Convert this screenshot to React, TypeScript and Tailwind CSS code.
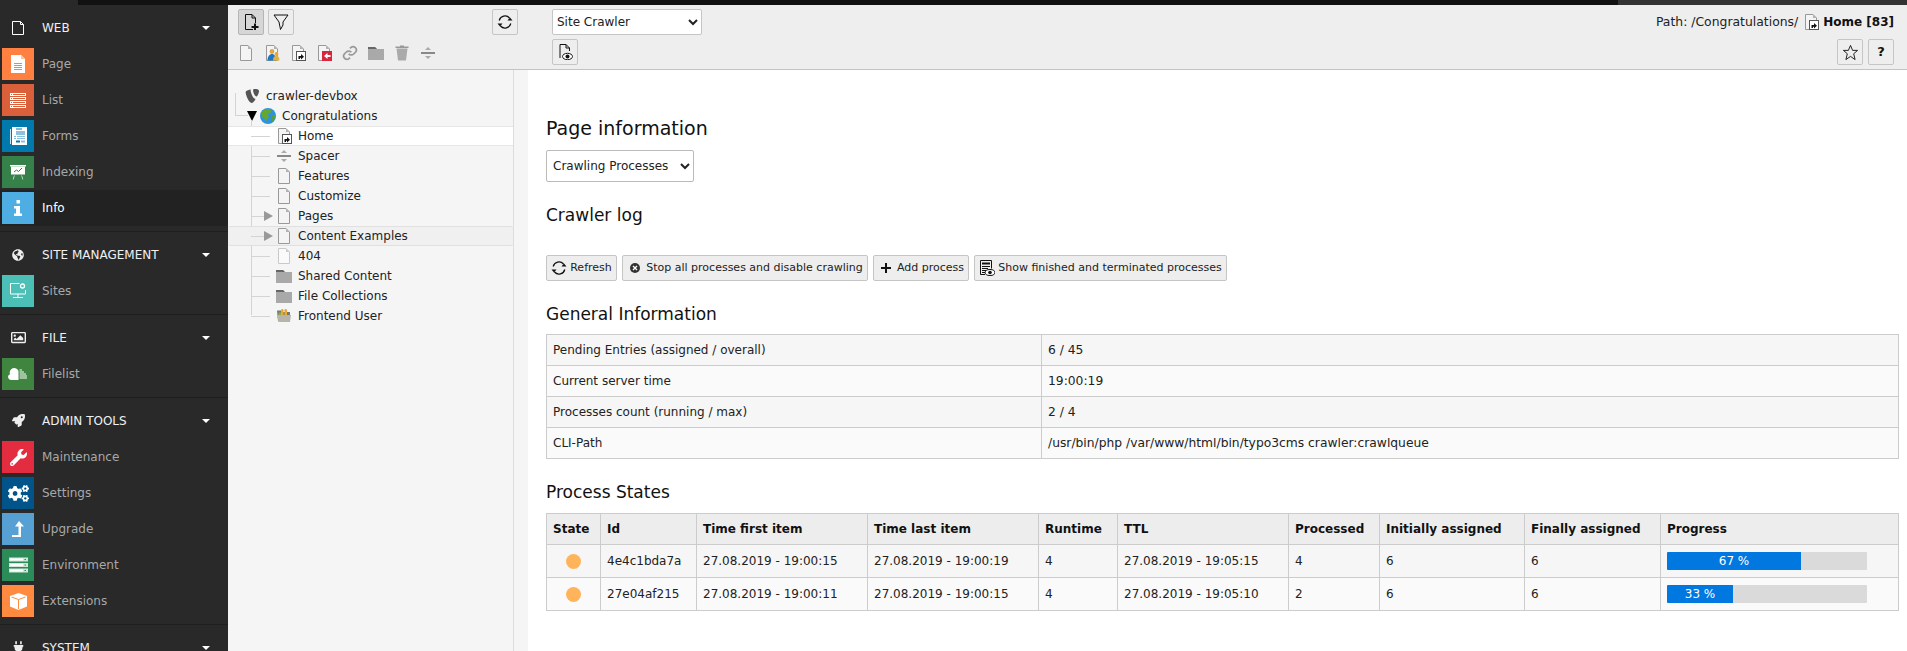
import type { ReactNode } from 'react'
import { FaCogs, FaGlobeAmericas, FaPlug, FaRegImage, FaRocket, FaWrench } from 'react-icons/fa'

const Svg = ({ size = 16, children }: { size?: number; children: ReactNode }) => (
  <svg width={size} height={size} viewBox="0 0 16 16" className="shrink-0">
    {children}
  </svg>
)

// generic page icon, the overlay goes in the lower right corner
const PageIcon = ({ overlay, light }: { overlay?: 'shortcut' | 'shortcutRed' | 'users'; light?: boolean }) => (
  <Svg>
    <path d="M2.500.5h7.500l3.500 3.500v11.500h-11z" fill={light ? '#fafafa' : '#f4f4f4'} stroke={light ? '#c9c9c9' : '#999'} />
    <path d="M10 .5v3.500h3.500z" fill={light ? '#ccc' : '#b2b2b2'} />
    {overlay === 'shortcut' && (
      <>
        <rect x="6.500" y="6.500" width="9" height="9" fill="#fff" stroke="#555" />
        <path d="M8.500 14v-3h2.500V9l3 2.800-3 2.700v-1.800H10V14z" fill="#111" />
      </>
    )}
    {overlay === 'shortcutRed' && (
      <>
        <rect x="6" y="6" width="10" height="10" fill="#d7263d" />
        <path d="M14.500 10h-3V8l-3.500 3 3.500 3v-2h3z" fill="#fff" />
      </>
    )}
    {overlay === 'users' && (
      <>
        <circle cx="8" cy="6.500" r="2.400" fill="#e8a33d" />
        <path d="M3.500 15.500c0-4 2-6.500 4.500-6.500s4 2.500 4 6.500z" fill="#1d76c4" />
        <circle cx="12.500" cy="9" r="1.900" fill="#e8a33d" />
        <path d="M9 15.500c0-3 1.400-4.800 3.300-4.800s3.200 1.800 3.200 4.800z" fill="#e2b13c" />
      </>
    )}
  </Svg>
)

const FolderIcon = () => (
  <Svg>
    <path d="M0 2h7l2 2h7v11H0z" fill="#a9a9a9" />
    <path d="M0 2h7l2 2H0z" fill="#666" />
  </Svg>
)

const FrontendUserIcon = () => (
  <Svg>
    <path d="M1 2.500h4l1.500 1.500h7.500v9H2z" fill="#777" />
    <rect x="5" y="1" width="2.500" height="7" rx="1.200" fill="#e6a93a" />
    <rect x="8.500" y="1" width="2.500" height="7" rx="1.200" fill="#e6a93a" />
    <path d="M2.500 14L1 7h14l-1 7z" fill="#b5b5ab" />
    <path d="M2.500 4.500h2.500v2.500H2.500z" fill="#8fae3c" />
  </Svg>
)

const SpacerIcon = () => (
  <Svg>
    <path d="M1 7h14v2H1z" fill="#888" />
    <path d="M8 2l3 3H5zM8 14l-3-3h6z" fill="#aaa" />
  </Svg>
)

const GlobeIcon = () => (
  <Svg>
    <circle cx="8" cy="8" r="8" fill="#2f93dc" />
    <path d="M4 1.500l5.500-.5 2 2-1.500 2.500-2.500.5 1.500 2.500-2 2.500-1 3-1.500-3.500-2.500-2-.5-3.500z" fill="#64a82f" />
    <path d="M11 8l4-.5-.5 3.500-2.500 2.500z" fill="#5a9f35" />
  </Svg>
)

const Typo3Logo = () => (
  <Svg>
    <path
      d="M11.600 10.700c-.2.100-.4.100-.6.100-1.800 0-4.400-6.200-4.400-8.200 0-.7.200-1 .4-1.200C4.900 1.600 2.700 2.300 2 3.200c-.2.200-.3.600-.3 1.100C1.700 7.500 5.100 15 7.600 15c1.200 0 3.100-2 4-4.300zM10.400 1c2.300 0 4.600.4 4.600 1.700 0 2.600-1.700 5.800-2.500 5.800-1.500 0-3.400-4.100-3.400-6.100 0-1 .4-1.400 1.300-1.400z"
      fill="#555"
    />
  </Svg>
)

const EyeBadge = () => (
  <>
    <ellipse cx="10.500" cy="12.500" rx="5" ry="3.200" fill="#fff" stroke="#111" />
    <circle cx="10.500" cy="12.500" r="2" fill="#111" />
  </>
)

const RefreshIcon = () => (
  <Svg>
    <path d="M2.200 6.500A6 6 0 0 1 12.500 4" fill="none" stroke="#111" strokeWidth="1.300" />
    <path d="M13.800 9.500A6 6 0 0 1 3.500 12" fill="none" stroke="#111" strokeWidth="1.300" />
    <path d="M10.500 6.500h5l-2.500-3zM5.500 9.500h-5l2.500 3z" fill="#111" />
  </Svg>
)

/* module icons, white on coloured square */
const moduleGlyphs: Record<string, ReactNode> = {
  Page: (
    <svg width="14" height="18" viewBox="0 0 14 18">
      <path d="M0 0h10l4 4v14H0z" fill="#fff" />
      <path d="M10 0l4 4h-4z" fill="#ffc49e" />
      <path d="M3 8h8v1H3zM3 10h8v1H3zM3 12h8v1H3zM3 14h8v1H3z" fill="#ff8040" />
    </svg>
  ),
  List: (
    <svg width="16" height="15" viewBox="0 0 16 15">
      <path d="M0 0h16v3H0zM0 4h16v3H0zM0 8h16v3H0zM0 12h16v3H0z" fill="#fff" />
      <path d="M1 1h1v1H1zM1 5h1v1H1zM1 9h1v1H1zM1 13h1v1H1zM3 1h12v1H3zM3 5h12v1H3zM3 9h12v1H3zM3 13h12v1H3z" fill="#d9603a" />
    </svg>
  ),
  Forms: (
    <svg width="17" height="18" viewBox="0 0 17 18">
      <path d="M0 2h1v15H0z" fill="#cfe6f1" />
      <path d="M2 0h15v18H2z" fill="#fff" />
      <path d="M6 4h9v4H6z" fill="#8cc0dc" />
      <path d="M6 1.500h6v1H6zM6 13.500h4v2H6z" fill="#0079ad" />
      <path d="M11 13.500h4v2h-4zM7 9h8v1H7zM7 11h8v1H7z" fill="#8cc0dc" />
      <path d="M4.500 9h1v1h-1zM4.500 11h1v1h-1z" fill="#0079ad" />
    </svg>
  ),
  Indexing: (
    <svg width="16" height="15" viewBox="0 0 16 15">
      <path d="M0 0h16v1.500H0z" fill="#fff" />
      <path d="M1 1.500h14v8H1z" fill="#fff" />
      <path d="M4 7l2.500-2 2 1.500L12 3" fill="none" stroke="#36804a" strokeWidth="1" />
      <path d="M4 10.500l-1.300 4h.8l1.300-4zM12 10.500l1.300 4h-.8l-1.300-4z" fill="#fff" opacity=".8" />
    </svg>
  ),
  Info: (
    <svg width="8" height="16" viewBox="0 0 8 16">
      <path d="M2.500 0h3.500v3.500H2.500zM0 6h6v7.500h2V16H0v-2.500h2V8.500H0z" fill="#fff" />
    </svg>
  ),
  Sites: (
    <svg width="16" height="16" viewBox="0 0 16 16">
      <path d="M9.500.5H.5v10.500h15V7" fill="none" stroke="#fff" strokeWidth="1" />
      <path d="M7.500 11h1v3h-1zM3 14h10v1H3z" fill="#fff" />
      <circle cx="12.500" cy="3" r="2" fill="none" stroke="#fff" strokeWidth="1.300" />
    </svg>
  ),
  Filelist: (
    <svg width="20" height="12" viewBox="0 0 20 12">
      <path d="M3 12a3 3 0 0 1-1-5.800A4.500 4.500 0 0 1 10.500 3v9z" fill="#fff" />
      <path d="M11.500 1.500H14v1h-2.500zM11.500 3.500h4.500v1h-4.500zM11.500 5.500H18v1h-6.500zM11.500 7.500H19v1h-7.500zM11.500 9.500H19v1h-7.500z" fill="#fff" />
    </svg>
  ),
  Maintenance: <FaWrench size={17} color="#fff" className="-scale-y-100 -rotate-90" />,
  Settings: <FaCogs size={21} color="#fff" />,
  Upgrade: (
    <svg width="12" height="16" viewBox="0 0 12 16">
      <path d="M7 0l5 5.500H9V16H0v-2h6.500V5.500H3z" fill="#fff" />
    </svg>
  ),
  Environment: (
    <svg width="19" height="16" viewBox="0 0 19 16">
      <path d="M0 .5h19v4H0zM0 6h19v4H0zM0 11.500h19v4H0z" fill="#cfe5d8" />
      <path d="M1 1.500h13v2H1zM1 7h13v2H1zM1 12.500h13v2H1z" fill="#fff" />
      <path d="M15.500 2H17v1h-1.500zM15.500 7.500H17v1h-1.500zM15.500 13H17v1h-1.500z" fill="#2b8c59" />
    </svg>
  ),
  Extensions: (
    <svg width="17" height="17" viewBox="0 0 17 17">
      <path d="M8.500 0L17 3v10.500L8.500 17 0 13.500V3z" fill="#fff" />
      <path d="M1.500 4l7 2.500 7-2.500M8.500 6.500V16" fill="none" stroke="#ff8a40" strokeWidth="1" />
    </svg>
  ),
}

const nav = [
  {
    title: 'WEB',
    icon: (
      <svg width="12" height="14" viewBox="0 0 12 14">
        <path d="M.5.500h8l3 3v10H.5zM8.500.500v3h3" fill="none" stroke="#fff" />
      </svg>
    ),
    items: [
      { name: 'Page', color: 'bg-[#ff8040]' },
      { name: 'List', color: 'bg-[#d9603a]' },
      { name: 'Forms', color: 'bg-[#0079ad]' },
      { name: 'Indexing', color: 'bg-[#36804a]' },
      { name: 'Info', color: 'bg-[#4eaee3]', active: true },
    ],
  },
  {
    title: 'SITE MANAGEMENT',
    icon: <FaGlobeAmericas size={12} color="#eee" />,
    items: [{ name: 'Sites', color: 'bg-[#4cbfb6]' }],
  },
  {
    title: 'FILE',
    icon: <FaRegImage size={15} color="#eee" />,
    items: [{ name: 'Filelist', color: 'bg-[#3f8540]' }],
  },
  {
    title: 'ADMIN TOOLS',
    icon: <FaRocket size={13} color="#eee" />,
    items: [
      { name: 'Maintenance', color: 'bg-[#e32c3f]' },
      { name: 'Settings', color: 'bg-[#00548a]' },
      { name: 'Upgrade', color: 'bg-[#56a0d3]' },
      { name: 'Environment', color: 'bg-[#2b8c59]' },
      { name: 'Extensions', color: 'bg-[#ff8a40]' },
    ],
  },
  { title: 'SYSTEM', icon: <FaPlug size={13} color="#eee" />, items: [] },
]

function Sidebar() {
  return (
    <aside className="w-[228px] shrink-0 bg-[#292929] overflow-hidden text-[12px]">
      {nav.map((group) => (
        <div key={group.title} className="border-b border-[#1f1f1f] pt-[9px] pb-[5px] last:border-b-0">
          <div className="flex items-center h-[32px] pb-[5px]">
            <span className="w-[36px] flex justify-center">{group.icon}</span>
            <span className="ml-[6px] text-[#f0f0f0]">{group.title}</span>
            <span className="ml-auto mr-[18px] w-0 h-0 border-x-[4px] border-x-transparent border-t-[4px] border-t-white" />
          </div>
          {group.items.map((item) => (
            <div
              key={item.name}
              className={`flex items-center h-[36px] pl-[2px] ${item.active ? 'bg-[#222222] text-white' : 'text-[#a8a8a8]'}`}
            >
              <span className={`w-[32px] h-[32px] flex items-center justify-center ${item.color}`}>
                {moduleGlyphs[item.name]}
              </span>
              <span className="ml-[8px]">{item.name}</span>
            </div>
          ))}
        </div>
      ))}
    </aside>
  )
}

const ToolBtn = ({ children, active }: { children: ReactNode; active?: boolean }) => (
  <button
    className={`w-[26px] h-[26px] flex items-center justify-center rounded-[2px] border ${
      active ? 'bg-[#d6d6d6] border-[#b5b5b5]' : 'bg-[#eeeeee] border-[#c5c5c5]'
    }`}
  >
    {children}
  </button>
)

function Toolbar() {
  return (
    <header className="h-[65px] shrink-0 bg-[#eeeeee] border-b border-[#c3c3c3] flex text-[12px] text-[#222]">
      <div className="w-[324px] pl-[10px] pt-[4px] flex flex-col shrink-0">
        <div className="flex items-center">
          <ToolBtn active>
            <Svg>
              <path d="M10 15.500H2.500V.5H9l3.500 3.500V9" fill="none" stroke="#111" />
              <path d="M9 .5v3.500h3.500" fill="none" stroke="#111" />
              <path d="M11 9.500h2v2.500h2.500v2H13v2h-2v-2H8.500v-2H11z" fill="#111" />
            </Svg>
          </ToolBtn>
          <span className="ml-[4px]">
            <ToolBtn>
              <Svg>
                <path d="M1 1h14L10 8v3l-2.500 4.500L6 8z" fill="none" stroke="#111" />
              </Svg>
            </ToolBtn>
          </span>
          <span className="ml-auto mr-[34px]">
            <ToolBtn>
              <RefreshIcon />
            </ToolBtn>
          </span>
        </div>
        <div className="flex items-center gap-[10px] mt-[10px]">
          <PageIcon />
          <PageIcon overlay="users" />
          <PageIcon overlay="shortcut" />
          <PageIcon overlay="shortcutRed" />
          <svg width="16" height="16" viewBox="0 0 24 24" fill="none" stroke="#999" strokeWidth="2.600">
            <path d="M10 13a5 5 0 0 0 7.500.5l3-3a5 5 0 0 0-7-7l-1.500 1.500" />
            <path d="M14 11a5 5 0 0 0-7.500-.5l-3 3a5 5 0 0 0 7 7l1.500-1.500" />
          </svg>
          <FolderIcon />
          <Svg>
            <path d="M2.500 3.500h11L12 15.500H4z" fill="#aaa" />
            <path d="M1.500 1.500h13V3h-13zM6 .5h4v1H6z" fill="#999" />
          </Svg>
          <SpacerIcon />
        </div>
      </div>
      <div className="pt-[4px] flex flex-col">
        <select className="w-[150px] h-[26px] bg-white border border-[#c5c5c5] rounded-[2px] text-[12px] text-[#222]">
          <option>Site Crawler</option>
        </select>
        <div className="mt-[4px]">
          <ToolBtn>
            <Svg>
              <path d="M3 14V.5h6l3.500 3.500v3" fill="none" stroke="#111" />
              <path d="M9 .5v3.500h3.500" fill="none" stroke="#111" />
              <EyeBadge />
            </Svg>
          </ToolBtn>
        </div>
      </div>
      <div className="ml-auto pr-[13px] pt-[4px] flex flex-col items-end">
        <div className="flex items-center h-[26px] whitespace-nowrap">
          <span className="text-[12.4px]">Path: /Congratulations/</span>
          <span className="ml-[5px] mr-[2px]">
            <PageIcon overlay="shortcut" />
          </span>
          <b className="ml-[2px] text-[#111]">Home [83]</b>
        </div>
        <div className="flex gap-[5px] mt-[4px]">
          <ToolBtn>
            <svg width="17" height="17" viewBox="0 0 24 24" fill="none" stroke="#111" strokeWidth="1.300">
              <path d="M12 2l3 7h7l-5.500 4.800L18.500 22 12 17.500 5.500 22l2-8.200L2 9h7z" />
            </svg>
          </ToolBtn>
          <ToolBtn>
            <b className="text-[#111] text-[13px]">?</b>
          </ToolBtn>
        </div>
      </div>
    </header>
  )
}

const tree = [
  { name: 'Home', icon: <PageIcon overlay="shortcut" />, selected: true },
  { name: 'Spacer', icon: <SpacerIcon /> },
  { name: 'Features', icon: <PageIcon /> },
  { name: 'Customize', icon: <PageIcon /> },
  { name: 'Pages', icon: <PageIcon />, expandable: true },
  { name: 'Content Examples', icon: <PageIcon />, expandable: true, hovered: true },
  { name: '404', icon: <PageIcon light /> },
  { name: 'Shared Content', icon: <FolderIcon /> },
  { name: 'File Collections', icon: <FolderIcon /> },
  { name: 'Frontend User', icon: <FrontendUserIcon /> },
]

function PageTree() {
  return (
    <div className="relative w-[286px] shrink-0 bg-[#f5f5f5] border-r border-[#dddddd] pt-[16px] text-[12px] text-[#222]">
      {/* tree connector lines */}
      <span className="absolute left-[7px] top-[23px] w-px h-[23px] bg-[#d4d4d4]" />
      <span className="absolute left-[7px] top-[45px] w-[13px] h-px bg-[#d4d4d4]" />
      <span className="absolute left-[23px] top-[50px] w-px h-[195px] bg-[#d4d4d4]" />
      <div className="flex items-center h-[20px] pl-[16px]">
        <Typo3Logo />
        <span className="ml-[6px]">crawler-devbox</span>
      </div>
      <div className="flex items-center h-[20px] pl-[19px]">
        <span className="w-0 h-0 border-x-[5px] border-x-transparent border-t-[10px] border-t-black" />
        <span className="ml-[3px]">
          <GlobeIcon />
        </span>
        <span className="ml-[6px]">Congratulations</span>
      </div>
      {tree.map((row) => (
        <div
          key={row.name}
          className={`relative flex items-center h-[20px] pl-[23px] border-y ${
            row.selected
              ? 'bg-white border-[#e6e6e6]'
              : row.hovered
                ? 'bg-[#f0f0f0] border-[#e0e0e0] rounded-[2px]'
                : 'border-transparent'
          }`}
        >
          <span className="w-[19px] h-px bg-[#d4d4d4]" />
          <span className="w-[6px] h-0 flex items-center">
            {row.expandable && (
              <span className="-ml-[6px] w-0 h-0 border-y-[5px] border-y-transparent border-l-[9px] border-l-[#999]" />
            )}
          </span>
          {row.icon}
          <span className="ml-[6px]">{row.name}</span>
        </div>
      ))}
    </div>
  )
}

const Btn = ({ children, icon, width }: { children: ReactNode; icon: ReactNode; width: string }) => (
  <button
    className={`${width} h-[26px] flex items-center justify-center gap-[3px] bg-[#eeeeee] border border-[#c5c5c5] rounded-[2px] text-[11px] text-[#222] whitespace-nowrap`}
  >
    {icon}
    {children}
  </button>
)

const general = [
  ['Pending Entries (assigned / overall)', '6 / 45'],
  ['Current server time', '19:00:19'],
  ['Processes count (running / max)', '2 / 4'],
  ['CLI-Path', '/usr/bin/php /var/www/html/bin/typo3cms crawler:crawlqueue'],
]

const headers = ['State', 'Id', 'Time first item', 'Time last item', 'Runtime', 'TTL', 'Processed', 'Initially assigned', 'Finally assigned', 'Progress']
const widths = ['w-[54px]', 'w-[96px]', 'w-[171px]', 'w-[171px]', 'w-[79px]', 'w-[171px]', 'w-[91px]', 'w-[145px]', 'w-[136px]', '']

const processes = [
  { id: '4e4c1bda7a', first: '27.08.2019 - 19:00:15', last: '27.08.2019 - 19:00:19', runtime: 4, ttl: '27.08.2019 - 19:05:15', done: 4, progress: 67, bg: 'bg-[#f6f6f6]' },
  { id: '27e04af215', first: '27.08.2019 - 19:00:11', last: '27.08.2019 - 19:00:15', runtime: 4, ttl: '27.08.2019 - 19:05:10', done: 2, progress: 33, bg: 'bg-[#fafafa]' },
]

const cell = 'border border-[#cccccc] px-[6px] text-left'

function Main() {
  return (
    <main className="flex-1 min-w-0 bg-white pl-[18px] pr-[7px] text-[12px] text-[#222]">
      <h1 className="text-[19px] leading-[24px] mt-[46px] text-[#111]">Page information</h1>
      <select className="block mt-[10px] w-[148px] h-[32px] bg-white border border-[#bbbbbb] rounded-[2px] pl-[2px] text-[12px] text-[#222]">
        <option>Crawling Processes</option>
      </select>
      <h2 className="text-[17px] leading-[22px] mt-[22px] text-[#111]">Crawler log</h2>
      <div className="flex gap-[5px] mt-[29px]">
        <Btn width="w-[71px]" icon={<RefreshIcon />}>
          Refresh
        </Btn>
        <Btn
          width="w-[246px]"
          icon={
            <span className="w-[16px] flex justify-center">
              <svg width="10" height="10" viewBox="0 0 10 10">
                <circle cx="5" cy="5" r="5" fill="#333" />
                <path d="M3 3l4 4M7 3l-4 4" stroke="#fff" strokeWidth="1.300" />
              </svg>
            </span>
          }
        >
          Stop all processes and disable crawling
        </Btn>
        <Btn
          width="w-[96px]"
          icon={
            <Svg>
              <path d="M7 3h2v4h4v2H9v4H7V9H3V7h4z" fill="#111" />
            </Svg>
          }
        >
          Add process
        </Btn>
        <Btn
          width="w-[253px]"
          icon={
            <Svg>
              <path d="M1.500.5h11v8M1.500.5v14H6" fill="none" stroke="#111" />
              <path d="M3 2.500h8v2H3zM3 6h8v1H3zM3 8h6v1H3zM3 10h4v1H3zM3 12h3v1H3z" fill="#111" />
              <ellipse cx="11" cy="12.500" rx="4.800" ry="3" fill="#fff" stroke="#111" />
              <circle cx="11" cy="12.500" r="1.800" fill="#111" />
            </Svg>
          }
        >
          Show finished and terminated processes
        </Btn>
      </div>
      <h2 className="text-[17px] leading-[22px] mt-[22px] text-[#111]">General Information</h2>
      <table className="mt-[9px] w-[1353px] border-collapse table-fixed bg-[#fafafa]">
        <tbody>
          {general.map(([label, value], i) => (
            <tr key={label} className={`h-[31px] ${i % 2 === 0 ? 'bg-[#f6f6f6]' : 'bg-[#fafafa]'}`}>
              <td className={`${cell} w-[495px]`}>{label}</td>
              <td className={`${cell} text-[12.3px]`}>{value}</td>
            </tr>
          ))}
        </tbody>
      </table>
      <h2 className="text-[17px] leading-[22px] mt-[22px] text-[#111]">Process States</h2>
      <table className="mt-[10px] w-[1353px] border-collapse table-fixed">
        <thead>
          <tr className="h-[31px] bg-[#ededed]">
            {headers.map((h, i) => (
              <th key={h} className={`${cell} ${widths[i]} font-bold text-[#111]`}>
                {h}
              </th>
            ))}
          </tr>
        </thead>
        <tbody>
          {processes.map((p) => (
            <tr key={p.id} className={`h-[33px] ${p.bg}`}>
              <td className={cell}>
                <span className="block mx-auto w-[15px] h-[15px] rounded-full bg-[#ffb45c]" />
              </td>
              <td className={cell}>{p.id}</td>
              <td className={cell}>{p.first}</td>
              <td className={cell}>{p.last}</td>
              <td className={cell}>{p.runtime}</td>
              <td className={cell}>{p.ttl}</td>
              <td className={cell}>{p.done}</td>
              <td className={cell}>6</td>
              <td className={cell}>6</td>
              <td className={cell}>
                <div className="w-[200px] h-[18px] bg-[#dadada] rounded-[1px] overflow-hidden">
                  <div
                    className="h-full bg-[#0078e0] text-white text-center leading-[18px]"
                    style={{ width: `${p.progress}%` }}
                  >
                    {p.progress} %
                  </div>
                </div>
              </td>
            </tr>
          ))}
        </tbody>
      </table>
    </main>
  )
}

export default function App() {
  return (
    <div className="h-screen flex flex-col overflow-hidden font-['DejaVu_Sans','Liberation_Sans',sans-serif]">
      <div className="h-[5px] shrink-0 flex">
        <div className="w-[78px] bg-[#292929]" />
        <div className="w-[1540px] bg-[#111111]" />
        <div className="flex-1 bg-[#333333]" />
      </div>
      <div className="flex flex-1 min-h-0">
        <Sidebar />
        <div className="flex-1 min-w-0 flex flex-col">
          <Toolbar />
          <div className="flex flex-1 min-h-0">
            <PageTree />
            <div className="w-[14px] shrink-0 bg-[#f5f5f5]" />
            <Main />
          </div>
        </div>
      </div>
    </div>
  )
}
